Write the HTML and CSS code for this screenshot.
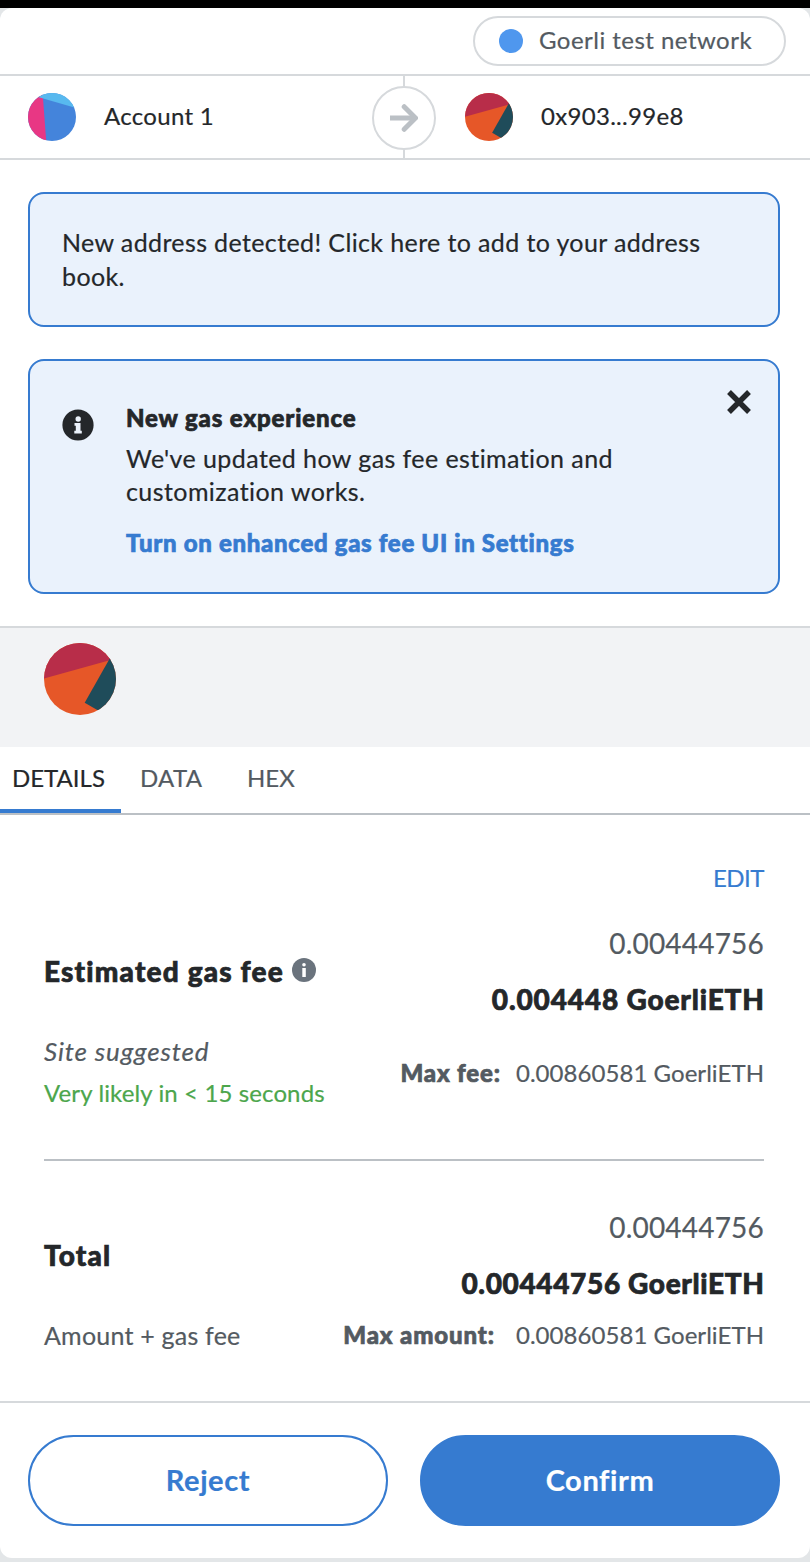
FILE: index.html
```html
<!DOCTYPE html>
<html lang="en">
<head>
<meta charset="utf-8">
<title>Confirm transaction</title>
<link rel="stylesheet" href="styles.css">
</head>
<body>
<svg class="defs" width="0" height="0">
  <defs>
    <symbol id="recipient" viewBox="0 0 72 72">
      <clipPath id="disc"><circle cx="36" cy="36" r="36"/></clipPath>
      <g clip-path="url(#disc)">
        <path fill="#e65728" d="M0 0h72v72H0z"/>
        <path fill="#b82d49" d="M0 0h72v15.6L0 35.5z"/>
        <path fill="#1f4c5a" d="M66 15 40.7 59.8 62 72h10V15z"/>
      </g>
    </symbol>
  </defs>
</svg>
<main class="popup">
  <header class="network-bar">
    <div class="network"><span class="dot"></span><span class="network-name">Goerli test network</span></div>
  </header>
  <section class="parties">
    <div class="party sender">
      <svg class="avatar" viewBox="0 0 48 48">
        <clipPath id="small-disc"><circle cx="24" cy="24" r="24"/></clipPath>
        <g clip-path="url(#small-disc)">
          <path fill="#4484db" d="M0 0h48v48H0z"/>
          <path fill="#e83784" d="M0 0h14.6L18.2 48H0z"/>
          <path fill="#58b9ef" d="M0 0h48v15L10 4z"/>
        </g>
      </svg>
      <span class="account">Account 1</span>
    </div>
    <div class="divider">
      <div class="arrow">
        <svg width="28" height="28" viewBox="0 0 28 28" fill="none" stroke="#bbc0c5" stroke-width="5" stroke-linecap="round"><path stroke-linecap="butt" d="M0 14H25"/><path d="M14.2 2.7 25.5 14 14.2 25.3"/></svg>
      </div>
    </div>
    <div class="party">
      <svg class="avatar"><use href="#recipient"/></svg>
      <span class="address">0x903...99e8</span>
    </div>
  </section>
  <section class="notices">
    <div class="notice address-notice">New address detected! Click here to add to your address<br>book.</div>
    <div class="notice gas-notice">
      <svg class="info" viewBox="0 0 32 32"><circle cx="16" cy="16" r="15.6" fill="#24272a"/><g fill="#ebf2fb"><circle cx="16.2" cy="10" r="2.7"/><path d="M12.5 14h6v7.8h1.3v2.8h-7.5v-2.8h1.5v-5h-1.3z"/></g></svg>
      <div class="gas-copy">
        <strong class="gas-title">New gas experience</strong>
        <p class="gas-text">We've updated how gas fee estimation and<br>customization works.</p>
        <a class="gas-link">Turn on enhanced gas fee UI in Settings</a>
      </div>
      <svg class="close" viewBox="0 0 24 24" stroke="#24272a" stroke-width="5.4"><path d="m2 2 20 20M22 2 2 22"/></svg>
    </div>
  </section>
  <section class="summary"><svg class="summary-avatar"><use href="#recipient"/></svg></section>
  <nav class="tabs">
    <span class="tab active">DETAILS</span>
    <span class="tab data">DATA</span>
    <span class="tab hex">HEX</span>
  </nav>
  <section class="details">
    <div class="edit">EDIT</div>
    <div class="row amounts">
      <div class="title gas-fee">Estimated gas fee
        <svg class="tip" viewBox="0 0 24 24"><circle cx="12" cy="12" r="12" fill="#6a737d"/><g fill="#fff"><circle cx="12" cy="6.7" r="1.8"/><path d="M10.3 10h3.5v9h-3.5z"/></g></svg>
      </div>
      <div class="values"><div class="fiat">0.00444756</div><div class="native fee-native">0.004448 GoerliETH</div></div>
    </div>
    <div class="row estimate">
      <div class="timing"><em class="suggested">Site suggested</em><div class="likely">Very likely in &lt; 15 seconds</div></div>
      <div class="max"><strong class="max-fee">Max fee:</strong><span class="max-value">0.00860581 GoerliETH</span></div>
    </div>
    <hr class="rule">
    <div class="row amounts">
      <div class="title total">Total</div>
      <div class="values"><div class="fiat">0.00444756</div><div class="native total-native">0.00444756 GoerliETH</div></div>
    </div>
    <div class="row totals">
      <div class="formula">Amount + gas fee</div>
      <div class="max"><strong class="max-amount">Max amount:</strong><span class="max-value">0.00860581 GoerliETH</span></div>
    </div>
  </section>
  <footer class="actions">
    <button class="button reject">Reject</button>
    <button class="button confirm">Confirm</button>
  </footer>
</main>
</body>
</html>
```
FILE: styles.css
```css
* { box-sizing: border-box; }
body { margin: 0; background: #e3e6e8; font: 24px/34px Lato, sans-serif; font-variant-ligatures: none; color: #24272a; border-top: 8px solid #000; height: 1562px; overflow: hidden; white-space: nowrap; -webkit-text-stroke: .2px currentColor; }
.defs { position: absolute; }
svg { display: block; flex: none; }
.popup { height: 1550px; background: #fff; border-radius: 12px; display: flex; flex-direction: column; overflow: hidden; }
.network-bar { height: 68px; border-bottom: 2px solid #d6d9dc; padding: 8px 24px; display: flex; justify-content: flex-end; flex: none; }
.network { width: 313px; height: 50px; border: 2px solid #d6d9dc; border-radius: 25px; padding-left: 24px; display: flex; align-items: center; gap: 16px; color: #535a61; }
.network-name { letter-spacing: .47px; padding-bottom: 2px; }
.dot { width: 24px; height: 24px; border-radius: 50%; background: #4f97ee; }
.parties { height: 84px; flex: none; border-bottom: 2px solid #d6d9dc; display: flex; }
.party { display: flex; align-items: center; gap: 28px; }
.account, .address { letter-spacing: .3px; padding-bottom: 2px; }
.sender { width: 372px; padding-left: 28px; }
.avatar { width: 48px; height: 48px; }
.divider { width: 64px; margin-right: 29px; display: flex; align-items: center; background: linear-gradient(#d6d9dc, #d6d9dc) 31px 0 / 2px 100% no-repeat; }
.arrow { width: 64px; height: 64px; margin-top: 2px; border: 2px solid #d6d9dc; border-radius: 50%; background: #fff; display: flex; align-items: center; justify-content: center; }
.notices { padding: 32px 30px 32px 28px; display: flex; flex-direction: column; gap: 32px; height: 466px; flex: none; }
.notice { border: 2px solid #367bd0; border-radius: 16px; background: #eaf2fc; }
.address-notice { height: 135px; padding: 31px 32px; font-size: 25px; letter-spacing: .38px; }
.gas-notice { height: 235px; padding: 28px 26px 0 32px; display: flex; }
.info { width: 32px; height: 32px; margin-top: 20px; }
.gas-copy { flex: 1; margin: 13px 0 0 32px; }
.gas-title { display: block; line-height: 32px; letter-spacing: .87px; }
.gas-text { margin: 8px 0 18px; line-height: 33px; font-size: 25px; letter-spacing: .42px; }
.gas-link { display: block; font-weight: 900; color: #367bd0; line-height: 33px; letter-spacing: .68px; }
strong { font-weight: 900; }
.gas-title, .gas-link, .title, .native, .max strong { -webkit-text-stroke: .7px currentColor; }
.close { width: 24px; height: 24px; margin: 1px 1px 0 -1px; }
.summary { height: 121px; flex: none; border-top: 2px solid #d6d9dc; background: #f2f3f5; padding: 15px 44px; }
.summary-avatar { width: 72px; height: 72px; }
.tabs { height: 68px; flex: none; border-bottom: 2px solid #bbc0c5; display: flex; color: #535a61; line-height: 62px; }
.tab { height: 66px; padding-left: 12px; }
.active { width: 121px; color: #24272a; border-bottom: 4px solid #367bd0; }
.data { width: 114px; padding-left: 19px; letter-spacing: .3px; }
.details { height: 586px; flex: none; padding: 46px 46px 0 44px; color: #535a61; }
.edit { text-align: right; color: #367bd0; letter-spacing: -.5px; }
.row { display: flex; justify-content: space-between; }
.amounts { height: 112px; margin-top: 20px; align-items: center; font-size: 28px; line-height: 56px; }
.title { font-weight: 900; color: #24272a; display: flex; align-items: center; gap: 8px; letter-spacing: 1.17px; }
.tip { width: 24px; height: 24px; margin-top: -3px; }
.values { text-align: right; }
.fiat { letter-spacing: .2px; }
.native { font-weight: 900; color: #24272a; }
.fee-native { letter-spacing: .85px; margin-right: -.85px; }
.total-native { letter-spacing: .65px; margin-right: -.65px; }
.estimate { height: 132px; padding-top: 4px; line-height: 41px; }
.suggested, .likely { display: block; }
.suggested { font-size: 26px; letter-spacing: .85px; }
.likely { color: #4ca64c; letter-spacing: .12px; }
.estimate .max { margin-top: 21px; }
.max { display: flex; }
.max-fee { margin-right: 15px; letter-spacing: .85px; }
.max-amount { margin-right: 21px; letter-spacing: .87px; }
.max-value { letter-spacing: .05px; }
.rule { border: 0; height: 2px; background: #bbc0c5; margin: 0 0 38px; }
.rule + .amounts { margin-top: 0; }
.totals { padding-top: 7px; }
.formula { font-size: 25px; letter-spacing: .22px; }
.actions { border-top: 2px solid #d6d9dc; padding: 32px 30px 32px 28px; display: flex; gap: 32px; }
.button { flex: 1; height: 91px; border: 2px solid #367bd0; border-radius: 46px; font: 700 29px/84px Lato, sans-serif; font-variant-ligatures: none; letter-spacing: .6px; padding: 0 0 2px; background: #fff; color: #367bd0; }
.confirm { background: #367bd0; color: #fff; }
```
